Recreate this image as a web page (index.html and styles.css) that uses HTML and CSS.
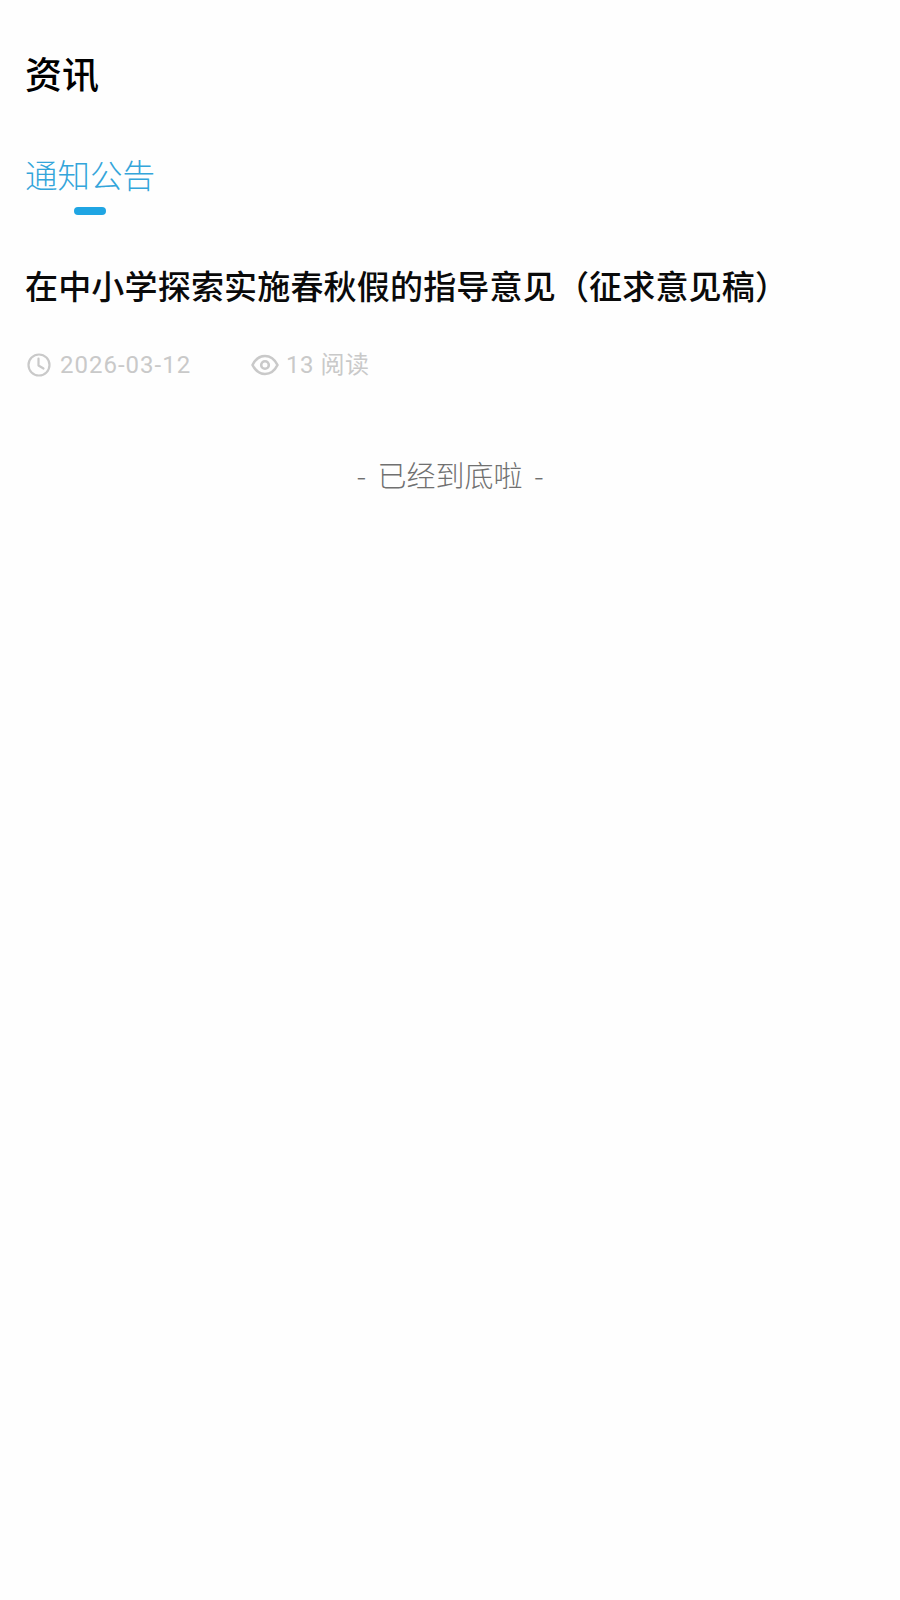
FILE: index.html
```html
<!DOCTYPE html>
<html lang="zh-CN">
<head>
<meta charset="utf-8">
<title>资讯</title>
<link rel="stylesheet" href="styles.css">
</head>
<body>
<main class="page">
  <h1 class="page-title">资讯</h1>
  <nav class="tabs">
    <div class="tab">
      <span class="tab-label">通知公告</span>
      <span class="tab-bar"></span>
    </div>
  </nav>
  <article class="item">
    <h2 class="item-title">在中小学探索实施春秋假的指导意见（征求意见稿）</h2>
    <div class="meta">
      <div class="meta-date">
        <svg class="icon" viewBox="0 0 24 24" fill="none" stroke="#c9c9c9" stroke-width="2.2" stroke-linecap="round" stroke-linejoin="round"><circle cx="12" cy="12" r="10.5"/><path d="M11.500 5.500V12.500L16.500 15.500"/></svg>
        <span>2026-03-12</span>
      </div>
      <div class="meta-views">
        <svg class="icon-eye" viewBox="0 0 28 22" fill="none" stroke="#c9c9c9" stroke-width="2.6" stroke-linejoin="round"><path d="M1.500 11C4.500 5 9 2 14 2S23.500 5 26.500 11C23.500 17 19 20 14 20S4.500 17 1.500 11Z"/><circle cx="14" cy="11" r="3.800"/></svg>
        <span>13 阅读</span>
      </div>
    </div>
  </article>
  <p class="end">- 已经到底啦 -</p>
</main>
</body>
</html>
```
FILE: styles.css
```css
* { box-sizing: border-box; }
html, body { margin: 0; padding: 0; background: #fefefe; }
body {
  width: 900px;
  height: 1600px;
  overflow: hidden;
  font-family: "Noto Sans CJK SC", "Noto Sans", sans-serif;
}
.page { padding: 50px 25px 0; }
.page-title {
  margin: 0;
  font-size: 37px;
  line-height: 46px;
  font-weight: 500;
  color: #000;
}
.tabs { display: flex; margin-top: 56px; }
.tab { display: flex; flex-direction: column; align-items: center; }
.tab-label {
  font-size: 32.500px;
  line-height: 44px;
  font-weight: 300;
  color: #33a5da;
}
.tab-bar {
  width: 32px;
  height: 8px;
  margin-top: 11px;
  border-radius: 4px;
  background: #1fa5e3;
}
.item { margin-top: 48px; }
.item-title {
  margin: 0;
  font-size: 33px;
  line-height: 44px;
  letter-spacing: 0.180px;
  font-weight: 500;
  color: #0a0a0a;
}
.meta {
  display: flex;
  align-items: center;
  margin-top: 42px;
  font-family: "Roboto", "Noto Sans CJK SC", sans-serif;
  font-size: 24px;
  line-height: 32px;
  color: #c9c9c9;
}
.meta-date, .meta-views { display: flex; align-items: center; }
.meta-date { width: 226px; letter-spacing: 1px; }
.meta-views { letter-spacing: 0.500px; }
.icon { width: 24px; height: 24px; margin: 0 9px 0 2px; }
.icon-eye { width: 28px; height: 22px; margin-right: 7px; }
.end {
  margin: 73px 0 0;
  text-align: center;
  font-size: 29px;
  line-height: 40px;
  font-weight: 300;
  word-spacing: 5px;
  color: #707070;
}
```
